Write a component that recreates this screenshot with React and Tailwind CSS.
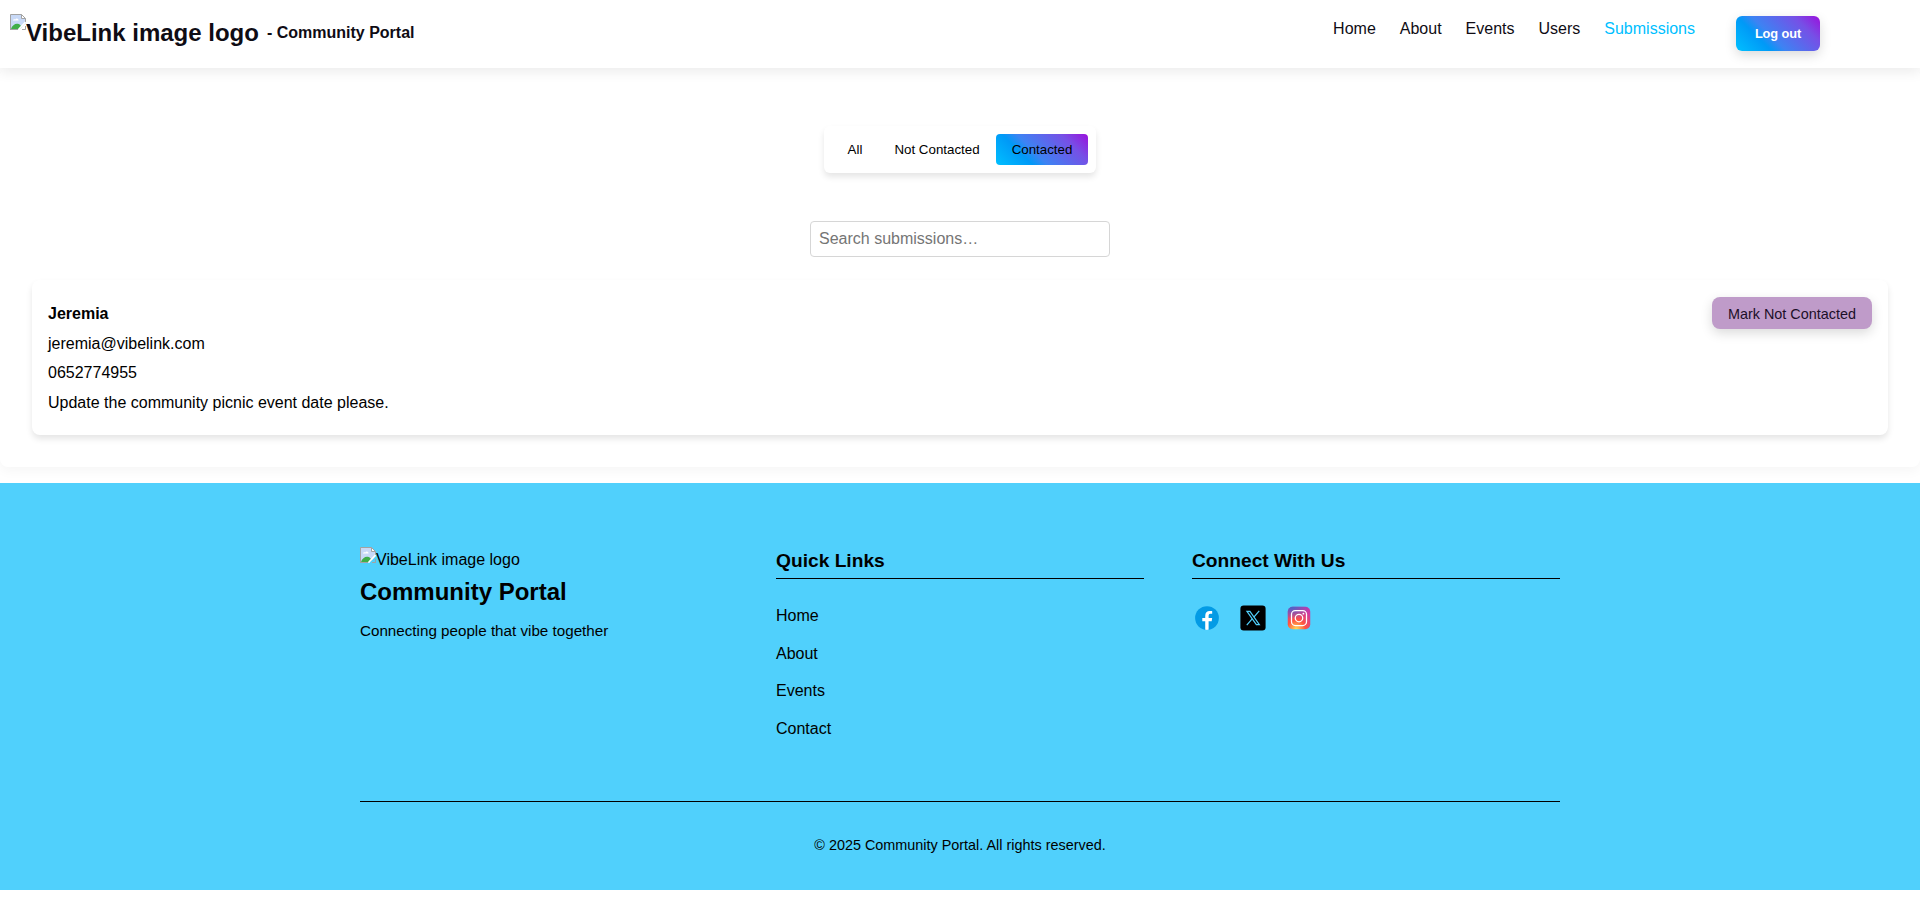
import React from "react";

function BrokenImage({ className }) {
  return (
    <svg viewBox="0 0 16 16" width="16" height="16" className={className} aria-hidden="true">
      <path d="M0.5 0.5H11.5L15.5 4.5V9.5L9.5 15.5H0.5Z" fill="#c8d9f7" />
      <path d="M3 6.5C3 5.2 4.6 4.8 5.3 5.4C6 3.8 8.6 4.2 8.6 6.5Z" fill="#fff" />
      <path d="M1 15C2 11.5 5 9.5 7.5 9.8C9.6 9.9 10.6 11.4 11.6 13L9.5 15Z" fill="#3fae49" />
      <path d="M11.5 0.5V4.5H15.5Z" fill="#fff" />
      <path d="M0.5 16V0.5H11.5L15.5 4.5V8.5M11.5 0.5V4.5H15.5" fill="none" stroke="#a3a3a3" />
      <path d="M0.5 15.5H8M12 15.5H15.5V12" fill="none" stroke="#a3a3a3" />
      <path d="M15.5 8L8.5 15.5" stroke="#fff" strokeWidth="1.6" />
    </svg>
  );
}

function Facebook() {
  return (
    <svg viewBox="0 0 48 48" width="30" height="30">
      <circle cx="24" cy="24" r="19" fill="#039be5" />
      <path
        fill="#fff"
        d="M26.572,29.036h4.917l0.772-4.995h-5.69v-2.73c0-2.075,0.678-3.915,2.619-3.915h3.119v-4.359c-0.548-0.074-1.707-0.236-3.897-0.236c-4.573,0-7.254,2.415-7.254,7.917v3.323h-4.701v4.995h4.701v13.729C22.089,42.905,23.032,43,24,43c0.875,0,1.729-0.08,2.572-0.194V29.036z"
      />
    </svg>
  );
}

function XLogo() {
  return (
    <svg viewBox="0 0 50 50" width="30" height="30">
      <rect x="4" y="4" width="42" height="42" rx="5.5" fill="#000" />
      <g fill="none" stroke="#50d0fc" strokeWidth="2">
        <path d="M14.9 14H19.9L35.6 36H30.6Z" />
        <path d="M35.4 13L26.4 23.5M23.6 26.6L14.6 37" />
      </g>
    </svg>
  );
}

function Instagram() {
  return (
    <svg viewBox="0 0 48 48" width="30" height="30">
      <defs>
        <radialGradient id="igWarm" cx="19.38" cy="42.035" r="44.9" gradientUnits="userSpaceOnUse">
          <stop offset="0" stopColor="#fd5" />
          <stop offset=".328" stopColor="#ff543f" />
          <stop offset=".348" stopColor="#fc5245" />
          <stop offset=".504" stopColor="#e64771" />
          <stop offset=".643" stopColor="#d53e91" />
          <stop offset=".761" stopColor="#cc39a4" />
          <stop offset=".841" stopColor="#c837ab" />
        </radialGradient>
        <radialGradient
          id="igCool"
          cx="11.786"
          cy="5.54"
          r="29.813"
          gradientTransform="matrix(1 0 0 .6663 0 1.849)"
          gradientUnits="userSpaceOnUse"
        >
          <stop offset="0" stopColor="#4168c9" />
          <stop offset=".999" stopColor="#4168c9" stopOpacity="0" />
        </radialGradient>
      </defs>
      <rect x="6" y="6" width="36" height="36" rx="8" fill="url(#igWarm)" />
      <rect x="6" y="6" width="36" height="36" rx="8" fill="url(#igCool)" />
      <g fill="none" stroke="#fff" strokeWidth="2">
        <circle cx="24" cy="24" r="6" />
        <rect x="12" y="12" width="24" height="24" rx="6" />
      </g>
      <circle cx="31" cy="17" r="1.5" fill="#fff" />
    </svg>
  );
}

const navItems = ["Home", "About", "Events", "Users"];
const quickLinks = ["Home", "About", "Events", "Contact"];

export default function App() {
  return (
    <div className="min-h-[915px] bg-white font-['Liberation_Sans',Arial,sans-serif] text-base text-black">
      <header className="relative flex h-[68px] items-start justify-between bg-white pl-[10px] pr-[100px] text-[#0f0c14] shadow-[0_4px_12px_rgba(0,0,0,0.08)]">
        <div className="flex items-start font-bold">
          <BrokenImage className="mt-[14px] shrink-0" />
          <span className="mt-[14px] text-2xl leading-[38px]">VibeLink image logo</span>
          <span className="ml-2 mt-5 leading-[26px]">- Community Portal</span>
        </div>
        <div className="flex items-start">
          <nav className="mt-4 flex gap-6 leading-[26px]">
            {navItems.map((item) => (
              <a key={item}>{item}</a>
            ))}
            <a className="text-[#00bfff]">Submissions</a>
          </nav>
          <button className="ml-[41px] mt-4 h-[35px] w-[84px] rounded-md bg-[linear-gradient(45deg,#00c0ff,#0099f7_30%,#3d83f3_42%,#7650e6_78%,#9b10dc)] text-[12.8px] font-bold tracking-[-0.1px] text-white shadow-[0_4px_12px_rgba(0,0,0,0.15)]">
            Log out
          </button>
        </div>
      </header>

      <main className="flex h-[399px] flex-col items-center rounded-lg bg-white px-8 pt-[58px] shadow-[0_4px_12px_rgba(0,0,0,0.04)]">
        <div className="flex rounded-md bg-white p-2 text-[13.333px] leading-[15px] shadow-[0_4px_6px_rgba(0,0,0,0.1)]">
          <button className="px-4 py-2">All</button>
          <button className="px-4 py-2">Not Contacted</button>
          <button className="rounded bg-[linear-gradient(45deg,#00c0ff,#0099f7_30%,#3d83f3_42%,#7650e6_78%,#9b10dc)] px-4 py-2">
            Contacted
          </button>
        </div>
        <input
          className="mt-12 h-9 w-[300px] shrink-0 rounded border border-[#d6d6d6] bg-white px-2 placeholder:text-[#757575]"
          placeholder="Search submissions…"
        />
        <article className="mt-[23px] flex h-[155px] w-full shrink-0 items-start justify-between rounded-lg bg-white px-4 shadow-[0_4px_6px_rgba(0,0,0,0.1)]">
          <div className="pt-[19px] leading-[29.6px]">
            <p className="font-bold">Jeremia</p>
            <p>jeremia@vibelink.com</p>
            <p>0652774955</p>
            <p>Update the community picnic event date please.</p>
          </div>
          <button className="mt-[17px] h-8 w-40 rounded-lg bg-[#bf9bc9] pt-0.5 text-[14.4px] leading-[23px] text-[#1c0f28] shadow-[0_4px_12px_rgba(0,0,0,0.15)]">
            Mark Not Contacted
          </button>
        </article>
      </main>

      <footer className="mt-4 h-[407px] bg-[#50d0fc] pt-16">
        <div className="mx-auto w-[1200px]">
          <div className="grid h-[254px] grid-cols-3 gap-12">
            <div>
              <div className="flex items-start">
                <BrokenImage className="shrink-0" />
                <span className="leading-[26px]">VibeLink image logo</span>
              </div>
              <h3 className="text-2xl font-bold leading-[38px]">Community Portal</h3>
              <p className="mt-2 text-[15.2px] leading-6">Connecting people that vibe together</p>
            </div>
            <div>
              <h4 className="h-8 border-b border-black text-[19.2px] font-bold leading-[28px]">Quick Links</h4>
              <ul className="mt-6 flex flex-col gap-3 leading-[25.6px]">
                {quickLinks.map((link) => (
                  <li key={link}>{link}</li>
                ))}
              </ul>
            </div>
            <div>
              <h4 className="h-8 border-b border-black text-[19.2px] font-bold leading-[28px]">Connect With Us</h4>
              <div className="mt-6 flex gap-4">
                <Facebook />
                <XLogo />
                <Instagram />
              </div>
            </div>
          </div>
          <p className="border-t border-black pt-8 text-center text-[14.4px] leading-[23px]">
            © 2025 Community Portal. All rights reserved.
          </p>
        </div>
      </footer>
    </div>
  );
}
